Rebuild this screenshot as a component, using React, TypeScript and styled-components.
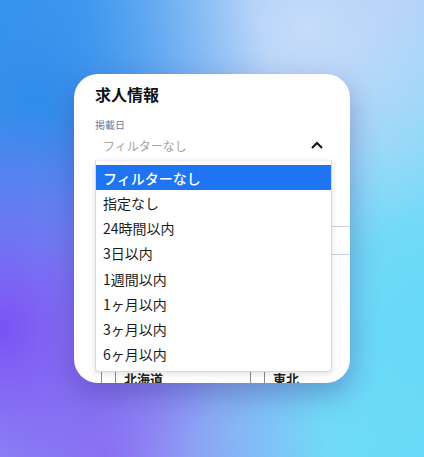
import React, { useState } from "react";
import styled, { createGlobalStyle } from "styled-components";

const options = [
  "フィルターなし",
  "指定なし",
  "24時間以内",
  "3日以内",
  "1週間以内",
  "1ヶ月以内",
  "3ヶ月以内",
  "6ヶ月以内",
];

const regions = ["北海道", "東北"];

const GlobalStyle = createGlobalStyle`
  html, body {
    margin: 0;
    padding: 0;
  }
  body {
    font-family: "Noto Sans CJK JP", "Noto Sans", sans-serif;
  }
`;

const Page = styled.div`
  min-height: 100vh;
  display: flex;
  align-items: center;
  justify-content: center;
  background:
    radial-gradient(circle at 0% 72%, #7a52f4 0%, rgba(122, 82, 244, 0) 42%),
    radial-gradient(circle at 25% 100%, #8f7af2 0%, rgba(143, 122, 242, 0) 40%),
    radial-gradient(circle at 8% 22%, #2f8ceb 0%, rgba(47, 140, 235, 0) 45%),
    radial-gradient(circle at 72% 6%, #c6dcfa 0%, rgba(198, 220, 250, 0) 42%),
    radial-gradient(circle at 100% 70%, #66d8f8 0%, rgba(102, 216, 248, 0) 60%),
    linear-gradient(135deg, #3a9cf0 0%, #a9c9f6 45%, #8ee0f8 75%, #6adcf8 100%);
`;

const Card = styled.div`
  position: relative;
  width: 276px;
  height: 309px;
  box-sizing: border-box;
  padding: 8px 21px 0 21px;
  background: #fff;
  border-radius: 24px;
  overflow: hidden;
  box-shadow: 0 12px 30px rgba(50, 30, 130, 0.35);
`;

const Title = styled.h2`
  margin: 0;
  font-size: 16px;
  line-height: 24px;
  font-weight: 700;
  color: #111;
`;

const Field = styled.div`
  margin-top: 12px;
`;

const Label = styled.div`
  font-size: 10px;
  line-height: 14px;
  color: #6f7b94;
`;

const Trigger = styled.div`
  height: 26px;
  display: flex;
  align-items: center;
  justify-content: space-between;
  padding: 0 6px 0 8px;
  font-size: 12px;
  color: #a3a3a3;
`;

const Chevron = styled.svg`
  width: 12px;
  height: 8px;
`;

const InputBox = styled.div<{ $top: number }>`
  margin-top: ${(p) => p.$top}px;
  width: 262px;
  height: 29px;
  box-sizing: border-box;
  border: 1px solid #c9d2e2;
  border-radius: 4px;
`;

const RegionGrid = styled.div`
  margin-top: 111px;
  padding-left: 6px;
  display: grid;
  grid-template-columns: 149px 149px;
`;

const Region = styled.label`
  display: flex;
  align-items: center;
  gap: 8px;
  height: 24px;
  font-size: 13px;
  font-weight: 700;
  color: #222;
`;

const Box = styled.span`
  width: 15px;
  height: 24px;
  box-sizing: border-box;
  border: 1.5px solid #8a8a8a;
  border-radius: 2px;
`;

const List = styled.ul`
  position: absolute;
  left: 21px;
  top: 86px;
  width: 235px;
  margin: 0;
  padding: 4px 0;
  list-style: none;
  background: #fff;
  border: 1px solid #d5d9e1;
  border-top-color: #eef0f3;
  border-radius: 0 0 4px 4px;
  box-shadow: 0 2px 6px rgba(0, 0, 0, 0.12);
`;

const Option = styled.li<{ $active: boolean }>`
  height: 25.25px;
  display: flex;
  align-items: center;
  padding: 0 7px;
  font-size: 14px;
  color: ${(p) => (p.$active ? "#fff" : "#1c1c1c")};
  background: ${(p) => (p.$active ? "#1f74f1" : "transparent")};
  font-weight: ${(p) => (p.$active ? 500 : 400)};
  cursor: default;
`;

export default function App() {
  const [active, setActive] = useState(0);

  return (
    <>
      <GlobalStyle />
      <Page>
        <Card>
          <Title>求人情報</Title>
          <Field>
            <Label>掲載日</Label>
            <Trigger>
              <span>フィルターなし</span>
              <Chevron viewBox="0 0 12 8">
                <polyline
                  points="1,7 6,2 11,7"
                  fill="none"
                  stroke="#111"
                  strokeWidth="2"
                />
              </Chevron>
            </Trigger>
          </Field>
          <InputBox $top={68} />
          <RegionGrid>
            {regions.map((r) => (
              <Region key={r}>
                <Box />
                {r}
              </Region>
            ))}
          </RegionGrid>
          <List role="listbox">
            {options.map((o, i) => (
              <Option
                key={o}
                role="option"
                $active={i === active}
                aria-selected={i === active}
                onMouseEnter={() => setActive(i)}
              >
                {o}
              </Option>
            ))}
          </List>
        </Card>
      </Page>
    </>
  );
}
